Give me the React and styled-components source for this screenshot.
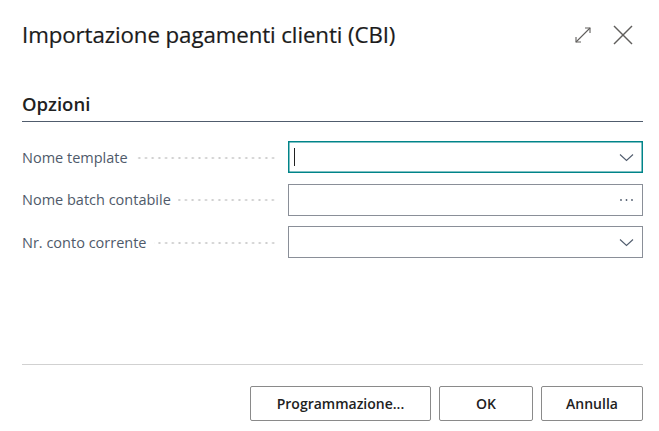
import React from 'react';
import styled, { createGlobalStyle } from 'styled-components';

const GlobalStyle = createGlobalStyle`
  html, body {
    margin: 0;
    padding: 0;
    background: #fff;
  }
  body {
    font-family: "Open Sans", "Noto Sans", sans-serif;
  }
`;

const Dialog = styled.div`
  width: 659px;
  height: 431px;
  box-sizing: border-box;
  padding: 0 16px 0 22px;
  display: flex;
  flex-direction: column;
  background: #fff;
`;

const Header = styled.div`
  height: 70px;
  display: flex;
  align-items: center;
  justify-content: space-between;
`;

const Title = styled.h1`
  margin: -2px 0 0;
  font-size: 22.3px;
  font-weight: 400;
  color: #1b1b1b;
  letter-spacing: -0.1px;
  -webkit-text-stroke: 0.2px #1b1b1b;
`;

const HeaderIcons = styled.div`
  display: flex;
  align-items: center;
  gap: 21px;
  margin-right: 10px;
`;

const IconButton = styled.button`
  border: 0;
  background: none;
  padding: 0;
  display: flex;
  color: #605e5c;
  cursor: pointer;
`;

const Section = styled.div`
  margin-top: 22px;
`;

const SectionTitle = styled.h2`
  margin: 0;
  font-size: 18.5px;
  font-weight: 600;
  line-height: 24px;
  color: #212121;
  padding-bottom: 5px;
  border-bottom: 1px solid #505c6d;
`;

const Fields = styled.div`
  display: flex;
  flex-direction: column;
  gap: 10.5px;
  margin-top: 19px;
`;

const Row = styled.div`
  display: grid;
  grid-template-columns: 254px 1fr;
  column-gap: 12px;
  align-items: center;
`;

const LabelCell = styled.div`
  display: flex;
  align-items: center;
  min-width: 0;
`;

const Label = styled.span`
  font-size: 14.5px;
  color: #4f5a6a;
  white-space: nowrap;
  padding-right: 7px;
`;

const Leader = styled.span`
  flex: 1;
  height: 4px;
  margin-top: 1px;
  background-image: radial-gradient(circle, #cdcdcd 0.9px, transparent 1.3px);
  background-size: 6.7px 4px;
  background-repeat: repeat-x;
  background-position: right center;
`;

const Input = styled.div`
  height: 32px;
  box-sizing: border-box;
  border: 1px solid ${(p) => (p.$focused ? '#008489' : '#8a8f98')};
  ${(p) => p.$focused && 'box-shadow: inset 0 0 0 0.5px #008489;'}
  display: flex;
  align-items: center;
  justify-content: space-between;
  padding: 0 8px 0 5px;
`;

const Caret = styled.span`
  width: 1px;
  height: 18px;
  background: #212121;
`;

const Trail = styled.span`
  display: flex;
  align-items: center;
  margin-left: auto;
  color: #505c6d;
`;

const Footer = styled.div`
  margin-top: auto;
  border-top: 1px solid #d1d1d1;
  padding: 21px 0 10px;
  display: flex;
  justify-content: flex-end;
  gap: 8px;
`;

const Button = styled.button`
  height: 35px;
  width: ${(p) => p.$w}px;
  box-sizing: border-box;
  border: 1px solid #8a8a8a;
  border-radius: 2px;
  background: #fff;
  font-family: "Open Sans", "Noto Sans", sans-serif;
  font-size: 14px;
  font-weight: 600;
  color: #212121;
  cursor: pointer;
`;

const Chevron = () => (
  <svg width="15" height="9" viewBox="0 0 15 9">
    <path d="M1 1.5 L7.5 7.5 L14 1.5" fill="none" stroke="currentColor" strokeWidth="1.1" />
  </svg>
);

const Dots = () => (
  <svg width="15" height="4" viewBox="0 0 15 4">
    <circle cx="2" cy="2" r="0.9" fill="currentColor" />
    <circle cx="7.5" cy="2" r="0.9" fill="currentColor" />
    <circle cx="13" cy="2" r="0.9" fill="currentColor" />
  </svg>
);

const fields = [
  { label: 'Nome template', focused: true, trail: 'chevron' },
  { label: 'Nome batch contabile', trail: 'dots' },
  { label: 'Nr. conto corrente', trail: 'chevron' },
];

export default function App() {
  return (
    <>
      <GlobalStyle />
      <Dialog>
        <Header>
          <Title>Importazione pagamenti clienti (CBI)</Title>
          <HeaderIcons>
            <IconButton title="Espandi">
              <svg width="18" height="18" viewBox="0 0 18 18" fill="none" stroke="currentColor" strokeWidth="1.1">
                <path d="M2 16 L16 2" />
                <path d="M11 2 H16 V7" />
                <path d="M2 11 V16 H7" />
              </svg>
            </IconButton>
            <IconButton title="Chiudi">
              <svg width="20" height="20" viewBox="0 0 20 20" fill="none" stroke="currentColor" strokeWidth="1.5">
                <path d="M1 1 L19 19" />
                <path d="M19 1 L1 19" />
              </svg>
            </IconButton>
          </HeaderIcons>
        </Header>

        <Section>
          <SectionTitle>Opzioni</SectionTitle>
          <Fields>
            {fields.map((f) => (
              <Row key={f.label}>
                <LabelCell>
                  <Label>{f.label}</Label>
                  <Leader />
                </LabelCell>
                <Input $focused={f.focused}>
                  {f.focused && <Caret />}
                  <Trail>{f.trail === 'dots' ? <Dots /> : <Chevron />}</Trail>
                </Input>
              </Row>
            ))}
          </Fields>
        </Section>

        <Footer>
          <Button $w={181}>Programmazione...</Button>
          <Button $w={94}>OK</Button>
          <Button $w={102}>Annulla</Button>
        </Footer>
      </Dialog>
    </>
  );
}
